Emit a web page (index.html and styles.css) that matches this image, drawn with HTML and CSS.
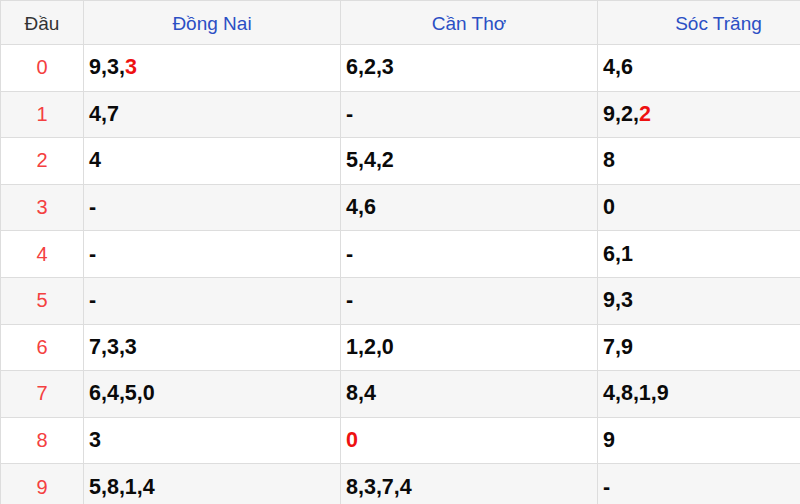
FILE: index.html
```html
<!DOCTYPE html>
<html lang="vi">
<head>
<meta charset="utf-8">
<link rel="stylesheet" href="styles.css">
</head>
<body>
<table class="loto">
  <thead>
    <tr>
      <th class="dau">Đầu</th>
      <th class="prov">Đồng Nai</th>
      <th class="prov">Cần Thơ</th>
      <th class="prov">Sóc Trăng</th>
    </tr>
  </thead>
  <tbody>
    <tr><td class="head">0</td><td>9,3,<span class="hot">3</span></td><td>6,2,3</td><td>4,6</td></tr>
    <tr><td class="head">1</td><td>4,7</td><td>-</td><td>9,2,<span class="hot">2</span></td></tr>
    <tr><td class="head">2</td><td>4</td><td>5,4,2</td><td>8</td></tr>
    <tr><td class="head">3</td><td>-</td><td>4,6</td><td>0</td></tr>
    <tr><td class="head">4</td><td>-</td><td>-</td><td>6,1</td></tr>
    <tr><td class="head">5</td><td>-</td><td>-</td><td>9,3</td></tr>
    <tr><td class="head">6</td><td>7,3,3</td><td>1,2,0</td><td>7,9</td></tr>
    <tr><td class="head">7</td><td>6,4,5,0</td><td>8,4</td><td>4,8,1,9</td></tr>
    <tr><td class="head">8</td><td>3</td><td><span class="hot">0</span></td><td>9</td></tr>
    <tr><td class="head">9</td><td>5,8,1,4</td><td>8,3,7,4</td><td>-</td></tr>
  </tbody>
</table>
</body>
</html>
```
FILE: styles.css
```css
html, body {
  margin: 0;
  padding: 0;
  background: #fff;
  overflow: hidden;
}
body {
  width: 800px;
  height: 504px;
}
.loto {
  border-collapse: collapse;
  width: 840px;
  table-layout: fixed;
  font-family: "Liberation Sans", Arial, sans-serif;
}
.loto th,
.loto td {
  border: 1px solid #dddddd;
  padding: 0 5px;
}
.loto th:nth-child(1) { width: 72px; }
.loto th:nth-child(2) { width: 246px; }
.loto th:nth-child(3) { width: 246px; }
.loto thead tr {
  height: 44px;
  background: #f6f6f6;
}
.loto th {
  font-weight: normal;
  font-size: 19px;
  text-align: center;
  color: #2b4fc4;
  padding-top: 2px;
}
.loto th.dau {
  color: #333333;
}
.loto tbody tr {
  height: 46.6px;
}
.loto tbody tr:nth-child(even) {
  background: #f6f6f6;
}
.loto td {
  font-size: 21.5px;
  font-weight: bold;
  color: #0a0a0a;
  text-align: left;
}
.loto td.head {
  font-weight: normal;
  font-size: 20px;
  color: #f44040;
  text-align: center;
}
.hot {
  color: #ee1111;
}
```
